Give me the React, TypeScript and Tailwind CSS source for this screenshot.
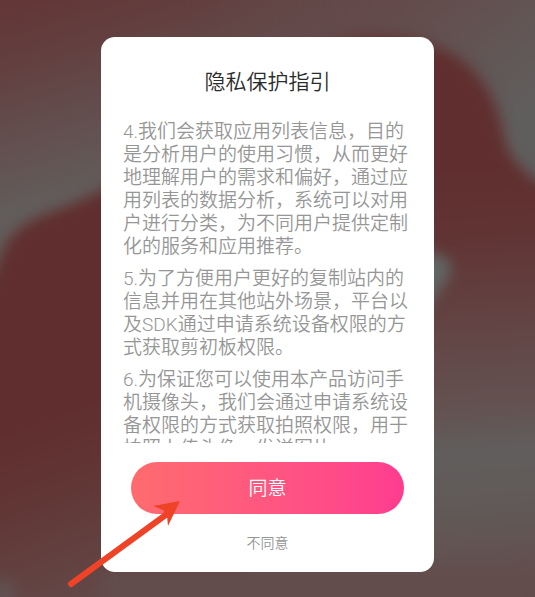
import { useState } from "react";

const clauses = [
    "4.我们会获取应用列表信息，目的是分析用户的使用习惯，从而更好地理解用户的需求和偏好，通过应用列表的数据分析，系统可以对用户进行分类，为不同用户提供定制化的服务和应用推荐。",
    "5.为了方便用户更好的复制站内的信息并用在其他站外场景，平台以及SDK通过申请系统设备权限的方式获取剪初板权限。",
    "6.为保证您可以使用本产品访问手机摄像头，我们会通过申请系统设备权限的方式获取拍照权限，用于拍照上传头像、发送图片。",
];

function Backdrop() {
    return (
        <svg
            className="absolute inset-0 h-full w-full"
            viewBox="0 0 535 597"
            preserveAspectRatio="none"
            aria-hidden="true"
        >
            <defs>
                <linearGradient id="sky" gradientUnits="userSpaceOnUse" x1="0" y1="0" x2="60" y2="200">
                    <stop offset="0" stopColor="#633536" />
                    <stop offset="0.3" stopColor="#633f3f" />
                    <stop offset="0.6" stopColor="#634c4c" />
                    <stop offset="1" stopColor="#625d5b" />
                </linearGradient>
                <linearGradient id="skyRight" gradientUnits="userSpaceOnUse" x1="400" y1="0" x2="500" y2="130">
                    <stop offset="0" stopColor="#644a4a" />
                    <stop offset="1" stopColor="#605e5d" />
                </linearGradient>
                <linearGradient id="fadeRight" x1="0" y1="0" x2="1" y2="0">
                    <stop offset="0" stopColor="#fff" stopOpacity="0" />
                    <stop offset="1" stopColor="#fff" />
                </linearGradient>
                <mask id="rightSide">
                    <rect x="180" width="220" height="597" fill="url(#fadeRight)" />
                    <rect x="400" width="135" height="597" fill="#fff" />
                </mask>
                <linearGradient id="leftHill" gradientUnits="userSpaceOnUse" x1="0" y1="435" x2="60" y2="600">
                    <stop offset="0" stopColor="#602e2e" />
                    <stop offset="0.4" stopColor="#613635" />
                    <stop offset="1" stopColor="#624746" />
                </linearGradient>
                <linearGradient id="rightHill" gradientUnits="userSpaceOnUse" x1="450" y1="170" x2="480" y2="597">
                    <stop offset="0" stopColor="#602e2e" />
                    <stop offset="0.16" stopColor="#613434" />
                    <stop offset="0.38" stopColor="#634545" />
                    <stop offset="0.56" stopColor="#635251" />
                    <stop offset="0.66" stopColor="#605e5d" />
                    <stop offset="0.8" stopColor="#615957" />
                    <stop offset="1" stopColor="#634c4b" />
                </linearGradient>
                <filter id="soft" x="-20%" y="-20%" width="140%" height="140%" colorInterpolationFilters="sRGB">
                    <feGaussianBlur stdDeviation="7" />
                </filter>
                <filter id="softer" x="-50%" y="-50%" width="200%" height="200%" colorInterpolationFilters="sRGB">
                    <feGaussianBlur stdDeviation="9" />
                </filter>
            </defs>
            <rect width="535" height="597" fill="url(#sky)" />
            <rect width="535" height="597" fill="url(#skyRight)" mask="url(#rightSide)" />
            <path
                d="M310 60 C340 31 410 31 452 54 C484 74 498 102 504 136 C509 160 522 178 580 202 V660 H220 V200 Z"
                fill="url(#rightHill)"
                filter="url(#soft)"
            />
            <path
                d="M-40 660 V320 C-2 290 -4 250 14 234 C24 224 34 219 44 215 C70 205 90 198 120 180 L250 150 V660 Z"
                fill="url(#leftHill)"
                filter="url(#soft)"
            />
            <path d="M100 570 H535 V610 H100 Z" fill="#634d4c" filter="url(#softer)" />
            <path d="M400 252 C430 246 456 258 451 271 C446 285 434 298 420 316 Z" fill="#616665" filter="url(#soft)" />
            <ellipse cx="2" cy="594" rx="12" ry="14" fill="#615857" filter="url(#softer)" />
        </svg>
    );
}

function PointerArrow() {
    return (
        <svg
            className="pointer-events-none absolute bottom-[-16px] left-[-34px]"
            width="116"
            height="90"
            viewBox="0 0 116 90"
            aria-hidden="true"
        >
            <path d="M4 86 L100 16" stroke="#ee4327" strokeWidth="6" strokeLinecap="round" />
            <path d="M113 3 L101 28 L100 18 L96 12 L86 8 Z" fill="#ee4327" />
        </svg>
    );
}

export default function App() {
    const [isOpen, setIsOpen] = useState(true);

    return (
        <main
            lang="zh-CN"
            className="relative flex min-h-screen items-center justify-center overflow-hidden bg-[#624746] px-4 pt-3 font-[Roboto,'Noto_Sans_CJK_SC',sans-serif]"
        >
            <Backdrop />

            {isOpen && (
                <section
                    role="dialog"
                    aria-modal="true"
                    aria-labelledby="privacy-title"
                    className="relative flex w-full max-w-[333px] flex-col rounded-[14px] bg-white px-[22px] pt-[29px] pb-3 font-[350]"
                >
                    <h1 id="privacy-title" className="text-center text-[21px] leading-8 text-[#2b2b2b]">
                        隐私保护指引
                    </h1>

                    {/* CLAUSES */}
                    <div className="mt-[22px] flex max-h-[323px] flex-col gap-[9px] overflow-y-auto text-[19px] leading-[23px] text-[#969696] [scrollbar-width:none]">
                        {clauses.map((clause) => (
                            <p key={clause}>{clause}</p>
                        ))}
                    </div>

                    {/* ACTIONS */}
                    <div className="mt-[19px] flex flex-col items-center gap-3 px-2">
                        <button
                            type="button"
                            onClick={() => setIsOpen(false)}
                            className="h-[52px] w-full cursor-pointer rounded-full bg-linear-to-r from-[#ff6b6e] to-[#ff3c90] pt-[2px] text-[19px] text-white"
                        >
                            同意
                        </button>
                        <button
                            type="button"
                            onClick={() => setIsOpen(false)}
                            className="cursor-pointer px-4 py-2 text-[14px] leading-[18px] text-[#969696]"
                        >
                            不同意
                        </button>
                    </div>

                    <PointerArrow />
                </section>
            )}
        </main>
    );
}
